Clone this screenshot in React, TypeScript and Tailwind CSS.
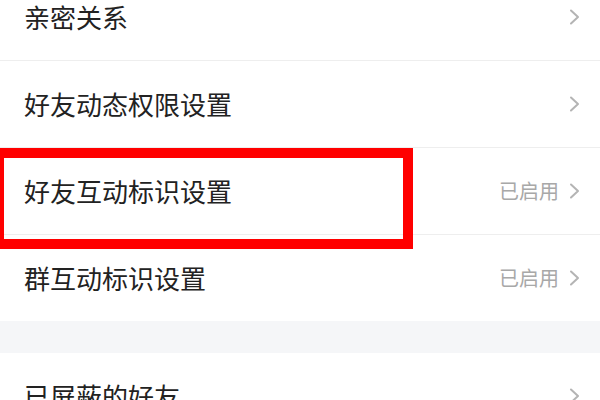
import React from "react";

type Row = { label: string; value?: string; highlight?: boolean };

const GROUP_A: Row[] = [
  { label: "亲密关系" },
  { label: "好友动态权限设置" },
  { label: "好友互动标识设置", value: "已启用", highlight: true },
  { label: "群互动标识设置", value: "已启用" },
];

function Chevron() {
  return (
    <svg width="11" height="16" viewBox="0 0 11 16" className="shrink-0">
      <polyline points="2,1.5 9,8 2,14.5" fill="none" stroke="#b4b4b4" strokeWidth="2" strokeLinecap="round" strokeLinejoin="round" />
    </svg>
  );
}

function SettingRow({ row, last }: { row: Row; last?: boolean }) {
  return (
    <div className="relative">
      <div className="flex h-[86px] items-center justify-between pl-6 pr-5">
        <span className="text-[26px] leading-none text-[#222222]">{row.label}</span>
        <div className="flex items-center gap-[10px]">
          {row.value && <span className="text-[20px] leading-none text-[#a8a8a8]">{row.value}</span>}
          <Chevron />
        </div>
      </div>
      {!last && <div className="h-px bg-[#eeeeee]" />}
      {row.highlight && (
        <div className="pointer-events-none absolute left-[-6px] top-0 h-[101px] w-[419px] border-[10px] border-[#ff0000]" />
      )}
    </div>
  );
}

export default function App() {
  return (
    <div
      className="h-[400px] w-[600px] overflow-hidden bg-white"
      style={{ fontFamily: '"Noto Sans CJK SC", "Noto Sans", sans-serif' }}
    >
      <div className="-mt-[26px]">
        {GROUP_A.map((r, i) => (
          <SettingRow key={r.label} row={r} last={i === GROUP_A.length - 1} />
        ))}
        <div className="h-[32px] bg-[#f5f6f8]" />
        <SettingRow row={{ label: "已屏蔽的好友" }} last />
      </div>
    </div>
  );
}
